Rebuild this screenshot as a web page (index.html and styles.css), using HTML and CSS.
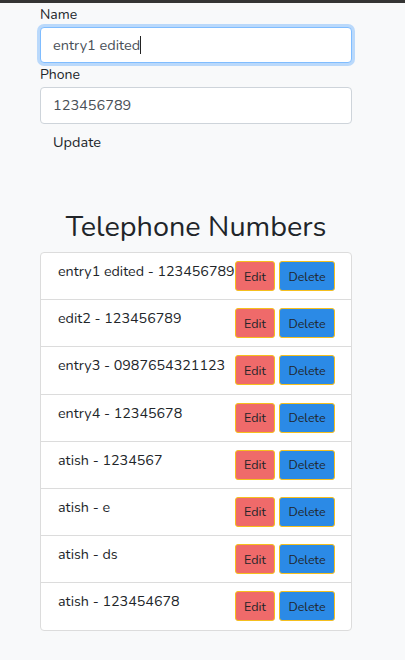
FILE: index.html
```html
<!DOCTYPE html>
<html>
<head>
<meta charset="utf-8">
<link rel="stylesheet" href="styles.css">
</head>
<body>
<div class="topbar"></div>
<main class="container">
  <form class="form">
    <label class="label">Name</label>
    <div class="input focused">entry1 edited<span class="caret"></span></div>
    <label class="label">Phone</label>
    <div class="input">123456789</div>
    <button type="button" class="update">Update</button>
  </form>
  <h2 class="title">Telephone Numbers</h2>
  <ul class="list">
    <li class="item"><span class="text">entry1 edited - 123456789</span><span class="actions"><button class="btn edit">Edit</button><button class="btn delete">Delete</button></span></li>
    <li class="item"><span class="text">edit2 - 123456789</span><span class="actions"><button class="btn edit">Edit</button><button class="btn delete">Delete</button></span></li>
    <li class="item"><span class="text">entry3 - 0987654321123</span><span class="actions"><button class="btn edit">Edit</button><button class="btn delete">Delete</button></span></li>
    <li class="item"><span class="text">entry4 - 12345678</span><span class="actions"><button class="btn edit">Edit</button><button class="btn delete">Delete</button></span></li>
    <li class="item"><span class="text">atish - 1234567</span><span class="actions"><button class="btn edit">Edit</button><button class="btn delete">Delete</button></span></li>
    <li class="item"><span class="text">atish - e</span><span class="actions"><button class="btn edit">Edit</button><button class="btn delete">Delete</button></span></li>
    <li class="item"><span class="text">atish - ds</span><span class="actions"><button class="btn edit">Edit</button><button class="btn delete">Delete</button></span></li>
    <li class="item"><span class="text">atish - 123454678</span><span class="actions"><button class="btn edit">Edit</button><button class="btn delete">Delete</button></span></li>
  </ul>
</main>
</body>
</html>
```
FILE: styles.css
```css
* { box-sizing: border-box; }
html, body { margin: 0; padding: 0; }
body {
  background: #f8f9fa;
  font-family: Nunito, "Noto Sans", sans-serif;
  color: #212529;
  font-size: 14px;
  width: 405px;
  height: 660px;
  overflow: hidden;
}
.topbar { height: 3px; background: #343434; }
.container { width: 312px; margin: 0 0 0 40px; }
.form { display: flex; flex-direction: column; }
.label { font-size: 14px; line-height: 24px; color: #212529; }
.input {
  height: 37px;
  border: 1px solid #ced4da;
  border-radius: 4px;
  background: #fff;
  padding: 0 12px;
  font-size: 14.5px;
  line-height: 35px;
  color: #495057;
  display: flex;
  align-items: center;
}
.input.focused {
  border-color: #80bdff;
  box-shadow: 0 0 0 3px rgba(0,123,255,.25);
  height: 36px;
}
.caret { display: inline-block; width: 1px; height: 18px; background: #222; }
.update {
  align-self: flex-start;
  background: transparent;
  border: 0;
  font: inherit;
  font-size: 14.5px;
  color: #212529;
  padding: 0 13px;
  height: 37px;
  line-height: 37px;
}
.title {
  margin: 48px 0 0;
  text-align: center;
  font-weight: 400;
  font-size: 28.8px;
  line-height: 36px;
  color: #212529;
}
.list {
  list-style: none;
  margin: 7px 0 0;
  padding: 0;
  background: #fff;
  border: 1px solid #dcdcdc;
  border-radius: 4px;
}
.item {
  display: flex;
  justify-content: space-between;
  align-items: flex-start;
  padding: 8px 16px 8px 17px;
  border-bottom: 1px solid #dcdcdc;
  height: 47.2px;
}
.item:last-child { border-bottom: 0; height: 47px; }
.text { font-size: 14.3px; line-height: 20px; color: #212529; padding-top: 1px; white-space: nowrap; }
.actions { display: flex; gap: 4px; }
.btn {
  font: inherit;
  font-size: 12.5px;
  height: 30px;
  border: 1px solid #f5bf1e;
  border-radius: 3px;
  color: #212529;
  padding: 0;
}
.edit { background: #ef6a6a; width: 40px; }
.delete { background: #2b8ae6; width: 56px; }
```
